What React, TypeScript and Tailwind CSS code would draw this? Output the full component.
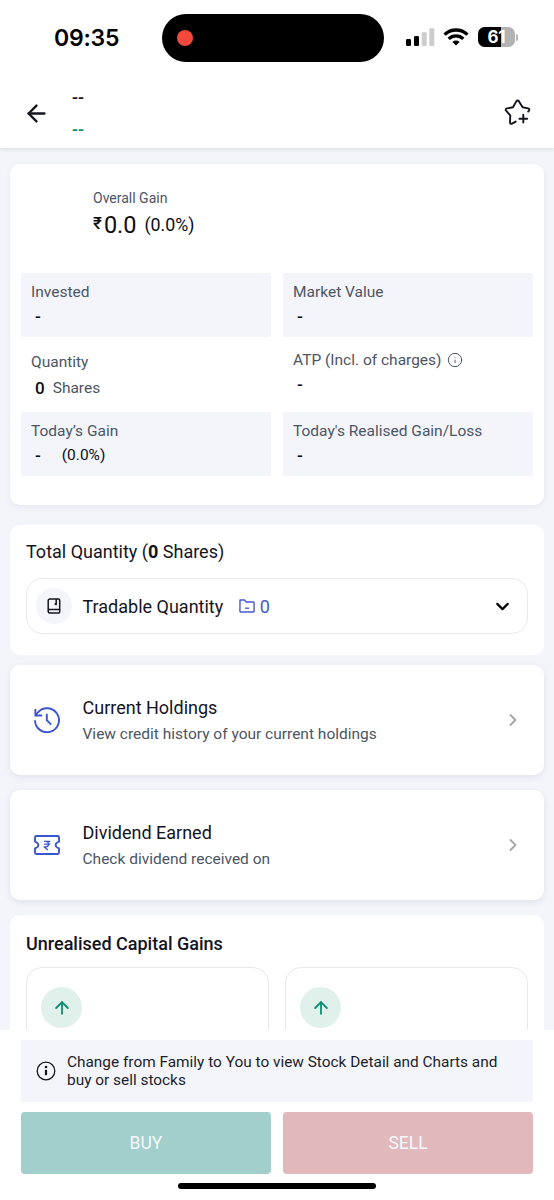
import React from 'react';
import { ArrowLeft, ArrowUp, ChevronDown, ChevronRight, Info } from 'lucide-react';

function StatusBar() {
  return (
    <div className="flex h-[76px] shrink-0 items-start">
      <div className="w-[162px] pt-[22px] pl-[54px] font-['Inter'] text-[23px] leading-8 font-semibold tracking-[-0.2px] text-black">
        09:35
      </div>
      <div className="mt-[14px] flex h-12 w-[222px] items-center rounded-full bg-black pl-[15px]">
        <div className="h-4 w-4 rounded-full bg-[#f4483a]" />
      </div>
      <div className="mt-[27px] ml-[22px] flex h-5 items-center">
        <svg width="29" height="20" viewBox="0 0 29 20">
          <rect x="0" y="12" width="5" height="7" rx="1.3" fill="#000" />
          <rect x="8" y="9" width="5" height="10" rx="1.3" fill="#000" />
          <rect x="15.7" y="5.2" width="5" height="13.8" rx="1.3" fill="#ccc" />
          <rect x="23.3" y="1.3" width="5" height="17.7" rx="1.3" fill="#ccc" />
        </svg>
        <svg className="ml-[8px]" width="26" height="20" viewBox="0 0 26 20" fill="none" stroke="#000">
          <path d="M1.6 7.6a16.3 16.3 0 0 1 22.8 0" strokeWidth="3.4" />
          <path d="M5.7 11.8a10.4 10.4 0 0 1 14.6 0" strokeWidth="3.2" />
          <path d="M13 18.6l-3.6-3.7a5.2 5.2 0 0 1 7.2 0z" fill="#000" stroke="none" />
        </svg>
        <div className="ml-[9px] flex h-5 w-[37px] items-center justify-center overflow-hidden rounded-[6.5px] bg-[linear-gradient(90deg,#000_61%,#b3b3b3_61%)] font-['Inter'] text-[17px] leading-5 font-bold tracking-[-0.3px] text-white">
          61
        </div>
        <div className="ml-[1px] h-[7px] w-[2px] rounded-r-full bg-[#b3b3b3]" />
      </div>
    </div>
  );
}

function StarPlus() {
  return (
    <svg width="28" height="28" viewBox="0 0 28 28" fill="none" stroke="#14141f" strokeWidth="1.9" strokeLinecap="round" strokeLinejoin="round">
      <path d="M24.2 13.6L25 12.6C25.7 11.5 25.3 10.6 24.2 10.4L18.6 9.3L15 3.4C14.2 2.2 13.1 2.2 12.3 3.4L9 9.3L3 10.4C1.6 10.7 1.3 11.7 2.1 12.7L6.3 17.4L6 24.3C6 25.6 6.8 26.1 8 25.6L11.7 23.6" />
      <path d="M19.3 16.8v7.8M15.4 20.7h7.8" />
    </svg>
  );
}

function Header() {
  return (
    <header className="relative z-10 h-[148px] shrink-0 bg-white shadow-[0_1px_4px_rgba(50,50,80,0.14)]">
      <StatusBar />
      <div className="flex h-[74px] items-center pr-[22px] pl-[23px]">
        <ArrowLeft className="h-[27px] w-[27px] text-[#14141f]" strokeWidth={2.1} />
        <div className="mt-[2px] ml-[22px] flex-1 text-[17.5px] leading-[32px] font-medium">
          <p className="text-[#14141f]">--</p>
          <p className="text-[#0b8f72]">--</p>
        </div>
        <div className="mb-[2px]">
          <StarPlus />
        </div>
      </div>
    </header>
  );
}

type StatProps = {
  label: React.ReactNode;
  children?: React.ReactNode;
  shaded?: boolean;
};

function Stat({ label, children, shaded }: StatProps) {
  return (
    <div className={shaded ? 'h-16 rounded-[2px] bg-[#f4f5fb] px-[10px] pt-[9px]' : 'h-[75px] px-[10px] pt-[13px]'}>
      <div className="flex items-center gap-[6px] text-[15.5px] leading-5 text-[#4c5564]">{label}</div>
      <div className="flex items-center pt-[4px] pl-[4px] text-[17px] leading-5 font-medium text-[#0d0d14]">
        {children ?? '-'}
      </div>
    </div>
  );
}

function GainCard() {
  return (
    <section className="h-[341px] shrink-0 rounded-[10px] bg-white px-[11px] shadow-[0_2px_6px_rgba(50,50,90,0.07)]">
      <div className="h-[109px] pt-[25px] pl-[72px]">
        <p className="text-[14px] leading-[18px] text-[#4c5564]">Overall Gain</p>
        <p className="flex items-center leading-[32px] text-[#0d0d14]">
          <span className="mb-[4px] text-[17px] font-medium">₹</span>
          <span className="ml-[2px] text-[23.5px]">0.0</span>
          <span className="ml-[8px] text-[17.8px]">(0.0%)</span>
        </p>
      </div>
      <div className="grid grid-cols-2 gap-x-3">
        <Stat label="Invested" shaded />
        <Stat label="Market Value" shaded />
        <Stat label={<span className="pt-[2px]">Quantity</span>}>
          <span className="pt-[2px]">0</span>
          <span className="ml-[8px] pt-[2px] text-[15.5px] font-normal text-[#4c5564]">Shares</span>
        </Stat>
        <Stat
          label={
            <>
              ATP (Incl. of charges)
              <Info className="h-4 w-4" strokeWidth={1.5} />
            </>
          }
        />
        <Stat label="Today’s Gain" shaded>
          <span>-</span>
          <span className="ml-[21px] text-[15.5px] font-normal">(0.0%)</span>
        </Stat>
        <Stat label="Today's Realised Gain/Loss" shaded />
      </div>
    </section>
  );
}

function QuantityCard() {
  return (
    <section className="mt-[20px] h-[130px] shrink-0 rounded-[10px] bg-white px-4 pt-[15px]">
      <h2 className="text-[18px] leading-6 text-[#14141f]">
        Total Quantity (<b>0</b> Shares)
      </h2>
      <div className="mt-[14px] flex h-14 items-center rounded-[16px] border border-[#e8e8ef] pr-[14px] pl-[9px]">
        <div className="flex h-9 w-9 items-center justify-center rounded-full bg-[#f4f5fb]">
          <svg width="14" height="16" viewBox="0 0 14 16" fill="none" stroke="#14141f" strokeWidth="1.5" strokeLinejoin="round">
            <path d="M2.8 1h8.7a1.2 1.2 0 0 1 1.2 1.2v11.6a1.2 1.2 0 0 1-1.2 1.2H2.8A1.6 1.6 0 0 1 1.2 13.4V2.6A1.6 1.6 0 0 1 2.8 1z" />
            <path d="M1.3 11.6h11.3M9.2 1v5.6l-1.6-.9" />
          </svg>
        </div>
        <span className="ml-[10.5px] text-[18px] text-[#14141f]">Tradable Quantity</span>
        <svg className="ml-[16px]" width="16" height="14" viewBox="0 0 16 14" fill="none" stroke="#4759c9" strokeWidth="1.4" strokeLinejoin="round">
          <path d="M1 1h4.5l1.8 2H14.4a.7.7 0 0 1 .7.7v8.6a.7.7 0 0 1-.7.7H1.6a.7.7 0 0 1-.7-.7z" />
          <path d="M6.2 9.2h3.9" />
        </svg>
        <span className="ml-[4.5px] text-[18px] text-[#4759c9]">0</span>
        <ChevronDown className="ml-auto h-[21px] w-[21px] text-black" strokeWidth={2.5} />
      </div>
    </section>
  );
}

function HistoryIcon() {
  return (
    <svg width="26" height="26" viewBox="0 0 26 26" fill="none" stroke="#3b55cc" strokeWidth="1.9">
      <path d="M1 13.2A12 12 0 1 0 3.4 6L1.6 8.3" />
      <path d="M1.4 2v6.5h6.8" />
      <path d="M12.8 6.8v6.4l4.4 4.4" />
    </svg>
  );
}

function TicketIcon() {
  return (
    <svg width="26" height="20" viewBox="0 0 26 20" fill="none" stroke="#3b55cc" strokeWidth="1.9" strokeLinejoin="round">
      <path d="M2.4 1h21.2a1.4 1.4 0 0 1 1.4 1.4v4.3l-1.8.8a2.8 2.8 0 0 0 0 5l1.8.8v4.3a1.4 1.4 0 0 1-1.4 1.4H2.4A1.4 1.4 0 0 1 1 17.6v-4.3l1.8-.8a2.8 2.8 0 0 0 0-5L1 6.7V2.4A1.4 1.4 0 0 1 2.4 1z" />
      <path d="M10 6.4h6.3M10 9.1h6.3M10 6.4h1.9a2.7 2.7 0 0 1 0 5.4H10l3.9 3.3" strokeWidth="1.3" />
    </svg>
  );
}

type LinkCardProps = {
  icon: React.ReactNode;
  title: string;
  text: string;
  className: string;
};

function LinkCard({ icon, title, text, className }: LinkCardProps) {
  return (
    <section className={`flex h-[110px] shrink-0 items-center rounded-[10px] bg-white pr-[21px] pl-[23.5px] shadow-[0_2px_6px_rgba(50,50,90,0.1)] ${className}`}>
      {icon}
      <div className="mb-[1px] ml-[23px] flex-1">
        <h3 className="text-[18px] leading-7 text-[#14141f]">{title}</h3>
        <p className="text-[15.5px] leading-6 text-[#4c5564]">{text}</p>
      </div>
      <ChevronRight className="h-5 w-5 text-[#a5a5a8]" strokeWidth={2.2} />
    </section>
  );
}

function CapitalGains() {
  return (
    <section className="mt-[15px] h-[240px] shrink-0 rounded-[10px] bg-white px-4 pt-[17px]">
      <h2 className="text-[18px] leading-6 font-medium text-[#14141f]">Unrealised Capital Gains</h2>
      <div className="mt-[11px] grid grid-cols-2 gap-4">
        {[0, 1].map((i) => (
          <div key={i} className="h-[150px] rounded-[16px] border border-[#e8e6f0] pt-[19px] pl-[14px]">
            <div className="flex h-[41px] w-[41px] items-center justify-center rounded-full bg-[#dff1ea]">
              <ArrowUp className="h-5 w-5 text-[#0b8f72]" strokeWidth={2.2} />
            </div>
          </div>
        ))}
      </div>
    </section>
  );
}

function Footer() {
  return (
    <footer className="h-[170px] shrink-0 bg-white px-[21px] pt-[10px]">
      <div className="flex h-[62px] items-center bg-[#f4f5fb] pl-[15px]">
        <svg width="20" height="20" viewBox="0 0 20 20" fill="none" stroke="#14141f">
          <circle cx="10" cy="10" r="8.8" strokeWidth="1.3" />
          <path d="M10 8.8v5.4" strokeWidth="2.2" />
          <circle cx="10" cy="6" r="1.3" fill="#14141f" stroke="none" />
        </svg>
        <p className="ml-[11px] text-[15.4px] leading-[18px] text-[#1d1d29]">
          Change from Family to You to view Stock Detail and Charts and
          <br />
          buy or sell stocks
        </p>
      </div>
      <div className="mt-[10px] grid grid-cols-2 gap-3 text-[17.5px] text-[#f4f8fb]">
        <button className="h-[62px] rounded-[4px] bg-[#a2cecb]">BUY</button>
        <button className="h-[62px] rounded-[4px] bg-[#e1b9bc]">SELL</button>
      </div>
      <div className="mx-auto mt-[9px] h-[6px] w-[198px] rounded-full bg-black" />
    </footer>
  );
}

export default function App() {
  return (
    <div className="flex h-[1200px] w-[554px] flex-col overflow-hidden bg-white font-['Roboto','Liberation_Sans',sans-serif]">
      <Header />
      <main className="flex flex-1 flex-col overflow-hidden bg-[#f4f5fb] px-[10px] pt-4">
        <GainCard />
        <QuantityCard />
        <LinkCard
          icon={<HistoryIcon />}
          title="Current Holdings"
          text="View credit history of your current holdings"
          className="mt-[10px]"
        />
        <LinkCard
          icon={<TicketIcon />}
          title="Dividend Earned"
          text="Check dividend received on"
          className="mt-[15px]"
        />
        <CapitalGains />
      </main>
      <Footer />
    </div>
  );
}
